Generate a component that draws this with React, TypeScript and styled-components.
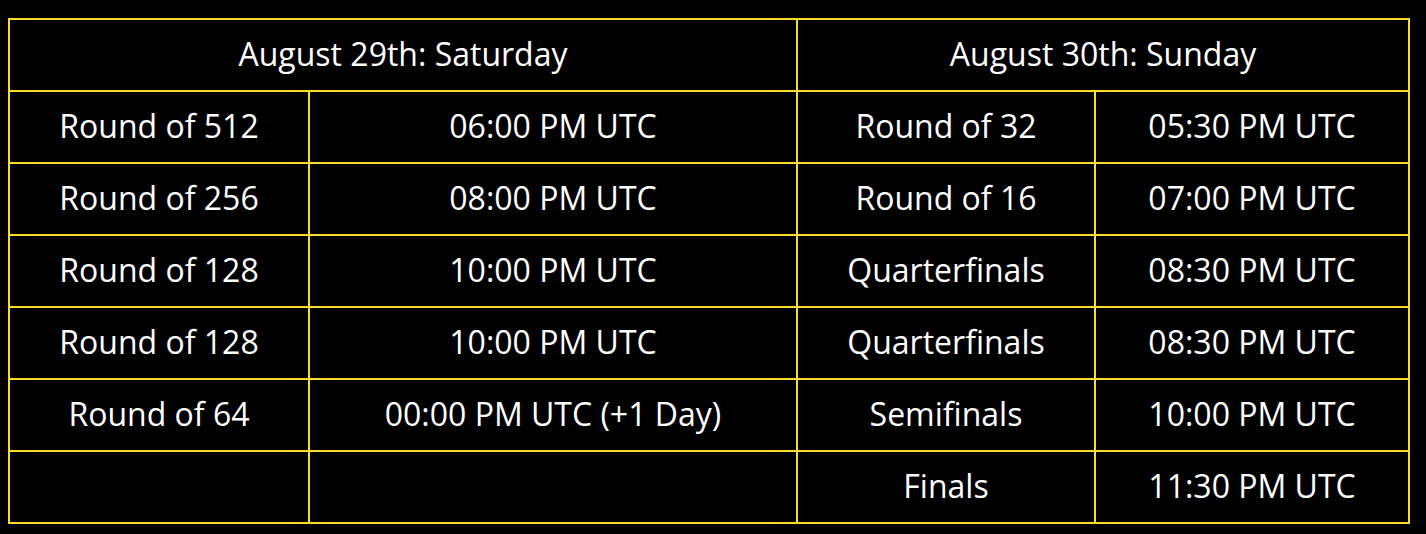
import React from "react";
import styled, { createGlobalStyle } from "styled-components";

const Global = createGlobalStyle`
  html, body { margin: 0; background: #000000; }
  body { padding: 18px 8px; font-family: "Open Sans", "Noto Sans", sans-serif; }
`;

const Table = styled.table`
  border-collapse: collapse;
  width: 1400px;
  table-layout: fixed;
  color: #ffffff;
  font-size: 32px;
`;

const Col = styled.col<{ $w: number }>`
  width: ${(p) => p.$w}px;
`;

const Cell = styled.td`
  border: 2px solid #f8dc2e;
  height: 66px;
  padding: 0 0 4px;
  text-align: center;
  vertical-align: middle;
  white-space: nowrap;
`;

const Head = styled(Cell).attrs({ as: "th" })`
  font-weight: 400;
`;

const widths = [300, 488, 298, 314];

const rows: [string, string, string, string][] = [
  ["Round of 512", "06:00 PM UTC", "Round of 32", "05:30 PM UTC"],
  ["Round of 256", "08:00 PM UTC", "Round of 16", "07:00 PM UTC"],
  ["Round of 128", "10:00 PM UTC", "Quarterfinals", "08:30 PM UTC"],
  ["Round of 128", "10:00 PM UTC", "Quarterfinals", "08:30 PM UTC"],
  ["Round of 64", "00:00 PM UTC (+1 Day)", "Semifinals", "10:00 PM UTC"],
  ["", "", "Finals", "11:30 PM UTC"],
];

export default function App() {
  return (
    <>
      <Global />
      <Table>
        <colgroup>
          {widths.map((w, i) => (
            <Col key={i} $w={w} />
          ))}
        </colgroup>
        <thead>
          <tr>
            <Head colSpan={2}>August 29th: Saturday</Head>
            <Head colSpan={2}>August 30th: Sunday</Head>
          </tr>
        </thead>
        <tbody>
          {rows.map((r, i) => (
            <tr key={i}>
              {r.map((c, j) => (
                <Cell key={j}>{c}</Cell>
              ))}
            </tr>
          ))}
        </tbody>
      </Table>
    </>
  );
}
